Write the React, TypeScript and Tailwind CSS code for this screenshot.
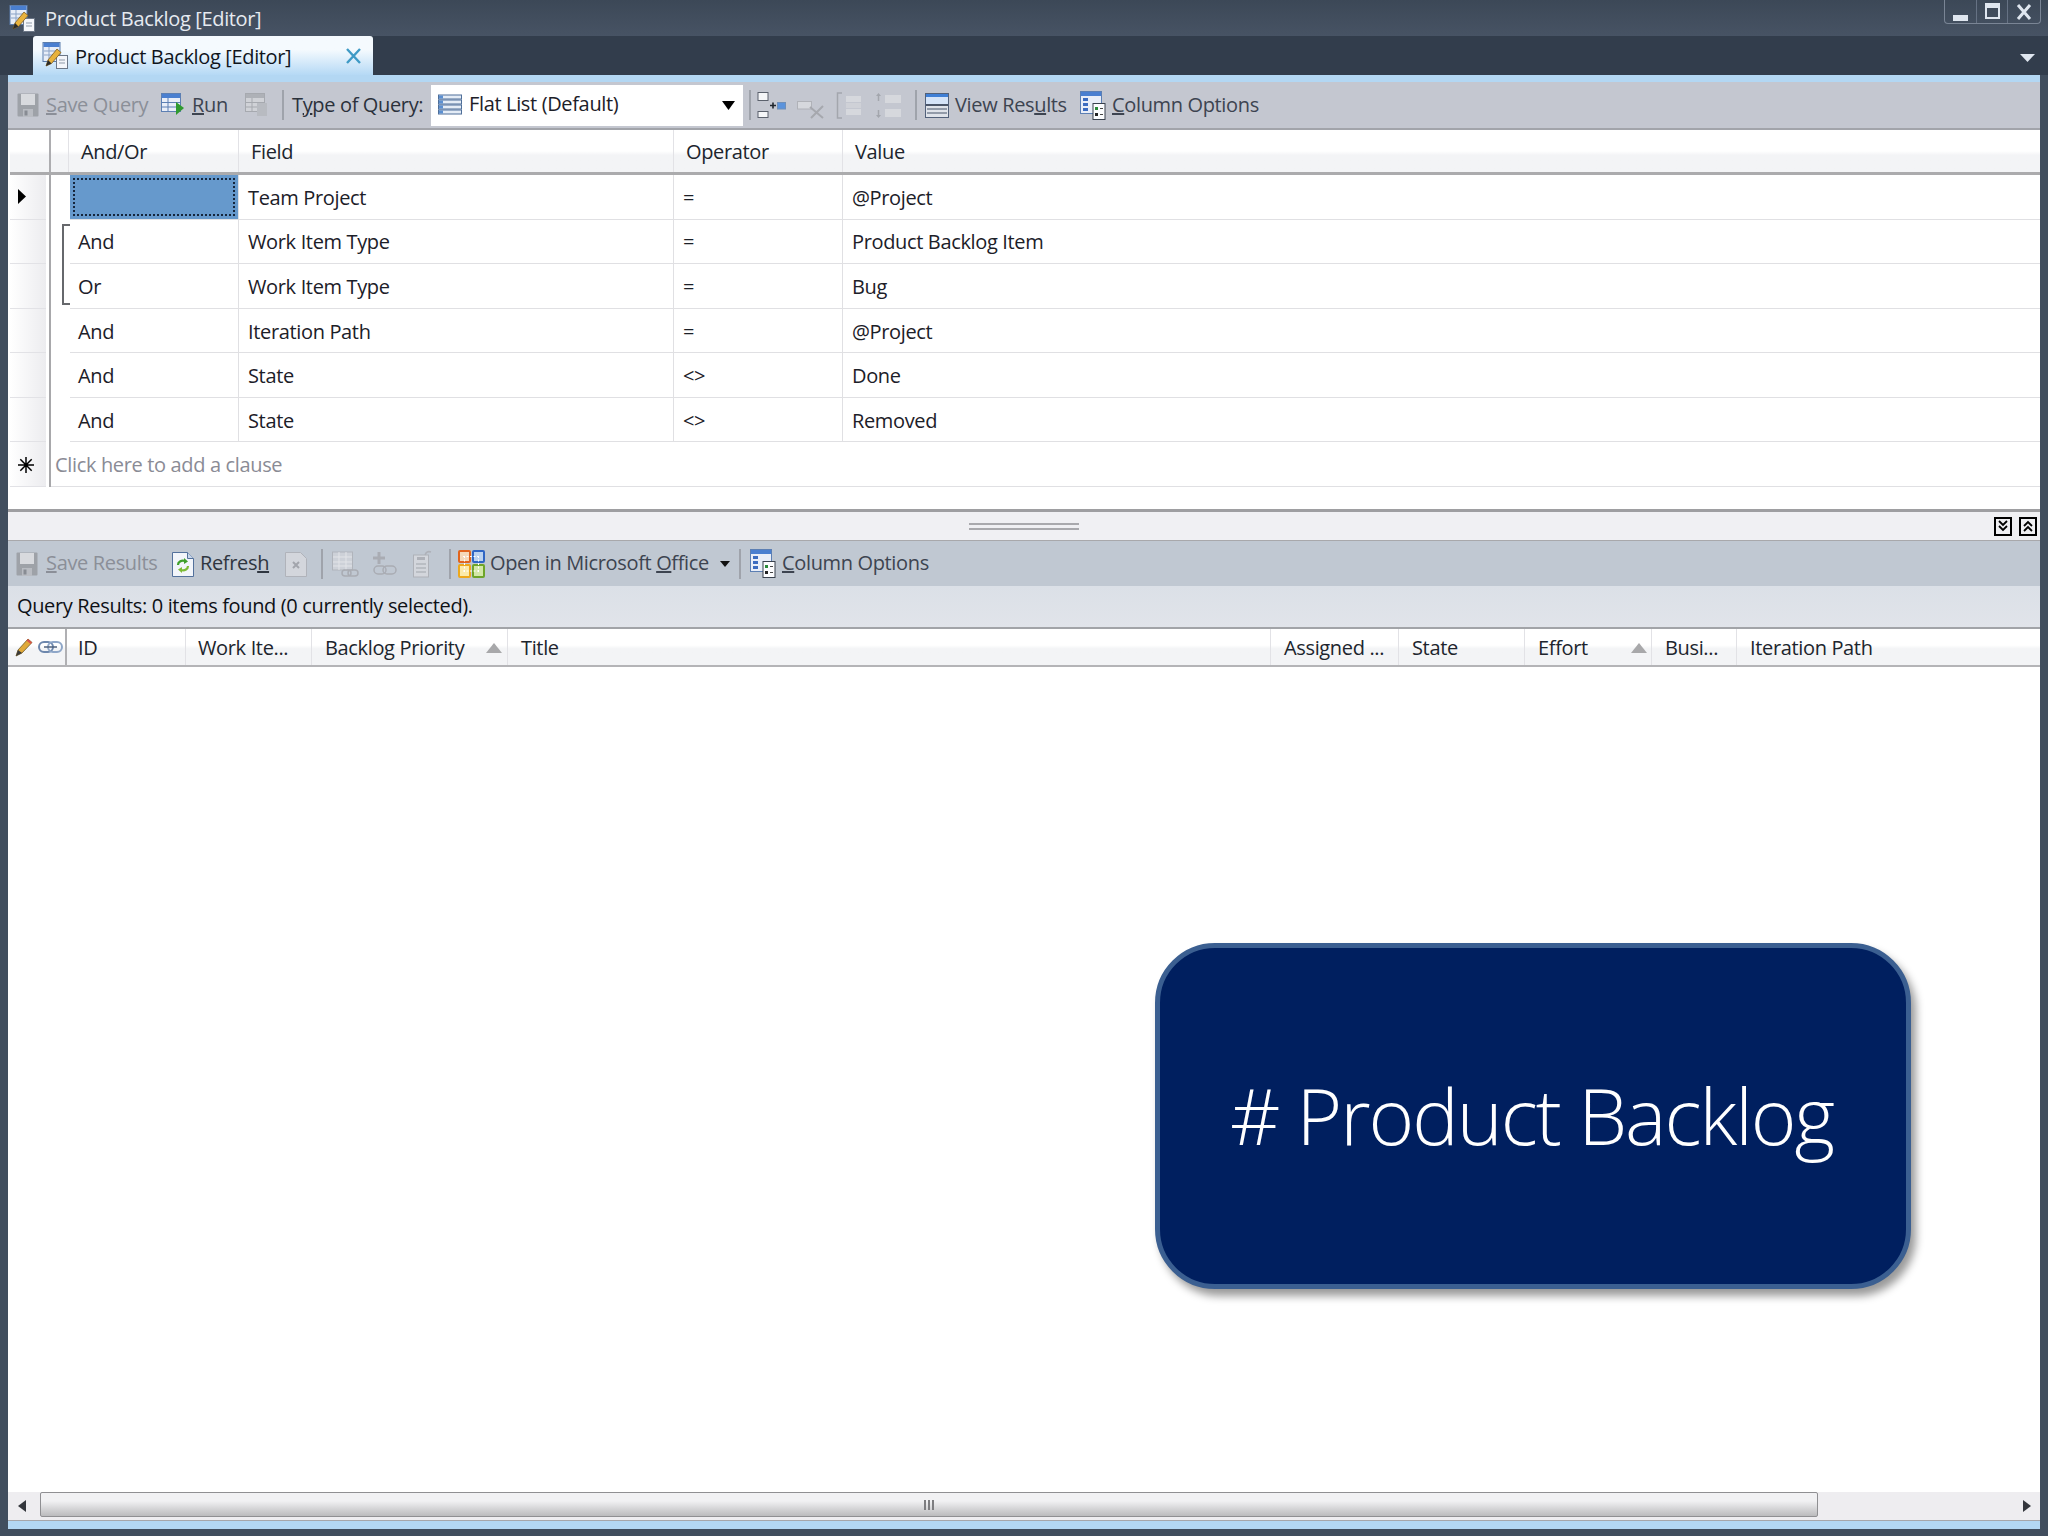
import type { ReactNode } from "react"

function SaveIcon() {
  return (
    <svg width="22" height="24" viewBox="0 0 22 24">
      <rect x="0.5" y="0.5" width="21" height="23" rx="1" fill="#9ea2a8" />
      <rect x="4" y="1" width="14" height="11" fill="#d8dade" />
      <rect x="6" y="16" width="10" height="8" fill="#b9bcc2" />
      <rect x="7.5" y="17.5" width="3" height="5" fill="#888c93" />
    </svg>
  )
}

function TableIcon({ muted }: { muted?: boolean }) {
  const head = muted ? "#aeb1b7" : "#4a7fd0"
  const cell = muted ? "#d0d2d7" : "#e9eef8"
  const line = muted ? "#a6a9af" : "#5c7fb3"
  return (
    <>
      <rect x="0.5" y="0.5" width="19" height="18" fill={cell} stroke={line} />
      <rect x="1" y="1" width="18" height="4" fill={head} />
      <path d="M1 9.5h18M1 14h18M7 5v13" stroke={line} strokeWidth="1" />
    </>
  )
}

function RunIcon() {
  return (
    <svg width="24" height="24" viewBox="0 0 24 24">
      <TableIcon />
      <path d="M15 9l8 6-8 7z" fill="#2f9a2f" />
    </svg>
  )
}

function CopyTableIcon() {
  return (
    <svg width="23" height="24" viewBox="0 0 23 24">
      <TableIcon muted />
      <rect x="12" y="10" width="10" height="13" fill="#b8bbc1" />
    </svg>
  )
}

function EditorIcon() {
  return (
    <svg width="26" height="27" viewBox="0 0 26 27">
      <rect x="1" y="0.5" width="17" height="19" fill="#e8eef8" stroke="#5b7cab" />
      <rect x="1.5" y="1" width="16" height="4" fill="#4a7fd0" />
      <path d="M2 9h15M2 13h15M7 5v14" stroke="#8ba3c6" />
      <rect x="14.5" y="13.5" width="11" height="13" fill="#f4f6fa" stroke="#6c7787" />
      <path d="M17 18h6M17 21h6" stroke="#8f99a8" />
      <path d="M4 24l2-6L15 7l4 3.5L9.5 21.5z" fill="#e8b23c" stroke="#7b5a20" strokeWidth="0.8" />
      <path d="M4 24l2-6 3.5 3.5z" fill="#2a2a2a" />
    </svg>
  )
}

function ListIcon() {
  return (
    <svg width="24" height="22" viewBox="0 0 24 22">
      {[1, 6, 11, 16].map((y) => (
        <g key={y}>
          <rect x="0.5" y={y} width="23" height="4" fill="#e4ecf6" stroke="#4f6f99" />
          <rect x="1" y={y + 0.5} width="4" height="3" fill="#5b8fd1" />
        </g>
      ))}
    </svg>
  )
}

function AddClauseIcon() {
  return (
    <svg width="29" height="26" viewBox="0 0 29 26">
      <rect x="1" y="0.5" width="10" height="8" fill="#f5f6f8" stroke="#5b616c" />
      <rect x="1" y="19.5" width="10" height="6" fill="#f5f6f8" stroke="#5b616c" />
      <path d="M13 13.5h6M16 10.500v6" stroke="#20262e" strokeWidth="1.6" />
      <rect x="20.500" y="10.500" width="8" height="6.500" fill="#5b93dc" stroke="#6f8fb8" />
    </svg>
  )
}

function DeleteClauseIcon() {
  return (
    <svg width="29" height="18" viewBox="0 0 29 18">
      <rect x="0.500" y="0.500" width="14" height="7.500" fill="#d6d8dd" stroke="#b0b2b8" />
      <path d="M13 6l13 11M26 5L14 17" stroke="#a6a8ae" strokeWidth="2" />
    </svg>
  )
}

function GroupIcon() {
  return (
    <svg width="26" height="27" viewBox="0 0 26 27">
      <path d="M6 1H1.500v25H6" fill="none" stroke="#a3a6ad" strokeWidth="1.500" />
      <rect x="10" y="4" width="15" height="6" fill="#d6d8dd" />
      <rect x="10" y="11" width="15" height="5" fill="#cfd1d7" />
      <rect x="10" y="17" width="15" height="6" fill="#d6d8dd" />
    </svg>
  )
}

function UngroupIcon() {
  return (
    <svg width="27" height="27" viewBox="0 0 27 27">
      <path d="M3.500 3v6M3.500 18v6" stroke="#a3a6ad" strokeWidth="1.500" />
      <path d="M1 4l2.500-3L6 4zM1 23l2.500 3L6 23z" fill="#a3a6ad" />
      <rect x="10" y="3" width="16" height="8" fill="#d6d8dd" />
      <rect x="10" y="17" width="16" height="8" fill="#d6d8dd" />
    </svg>
  )
}

function ViewResultsIcon() {
  return (
    <svg width="24" height="25" viewBox="0 0 24 25">
      <rect x="0.500" y="0.500" width="23" height="24" fill="#dfe3ea" stroke="#52617a" />
      <rect x="1" y="1" width="22" height="3" fill="#3f7fd6" />
      <rect x="1" y="4" width="22" height="7" fill="#d5e4f8" />
      <rect x="1" y="11" width="22" height="2" fill="#4b5669" />
      <path d="M2 16h20M2 20h20" stroke="#7a8494" strokeWidth="1.500" />
    </svg>
  )
}

function ColumnOptionsIcon() {
  return (
    <svg width="26" height="29" viewBox="0 0 26 29">
      <rect x="0.5" y="0.5" width="21" height="22" fill="#e9eef8" stroke="#5c7fb3" />
      <rect x="1" y="1" width="20" height="4" fill="#4a7fd0" />
      <rect x="3" y="7" width="5" height="3" fill="#3c6cc0" />
      <rect x="3" y="12" width="5" height="3" fill="#3c6cc0" />
      <rect x="3" y="17" width="5" height="3" fill="#3c6cc0" />
      <rect x="13" y="12.5" width="12" height="16" fill="#fbfcfe" stroke="#39414d" />
      <rect x="15" y="16" width="3" height="3" fill="#2a8a3a" />
      <rect x="15" y="22" width="3" height="3" fill="#222" />
      <path d="M20 17.5h3M20 23.5h3" stroke="#444" />
    </svg>
  )
}

function RefreshIcon() {
  return (
    <svg width="22" height="26" viewBox="0 0 22 26">
      <path d="M0.500 1.500h15l6 6v18H0.500z" fill="#f2f5fa" stroke="#53719c" />
      <path d="M15.500 1.500v6h6" fill="#c8d6ea" stroke="#53719c" />
      <path d="M6 14c0-3 3-5 7-4" fill="none" stroke="#3f9f2b" strokeWidth="2.200" />
      <path d="M12 7l4 3.500-4 2.500z" fill="#3f9f2b" />
      <path d="M16 15c0 3-3 5-7 4" fill="none" stroke="#7cbb35" strokeWidth="2.200" />
      <path d="M10 22l-4-3.500 4-2.500z" fill="#7cbb35" />
    </svg>
  )
}

function DocXIcon() {
  return (
    <svg width="22" height="26" viewBox="0 0 22 26">
      <path d="M0.500 1.500h15l6 6v18H0.500z" fill="#d3d6dc" stroke="#b0b3ba" />
      <path d="M8 11l6 6M14 11l-6 6" stroke="#a2a5ac" strokeWidth="2" />
    </svg>
  )
}

function LinkTableIcon() {
  return (
    <svg width="27" height="28" viewBox="0 0 27 28">
      <rect x="0.500" y="2" width="20" height="18" fill="#cdd1d8" stroke="#b0b4bb" />
      <path d="M1 7h19M1 12h19M1 16h19M7 2v18M14 2v18" stroke="#e2e4e8" />
      <rect x="10" y="20" width="9" height="6" rx="3" fill="none" stroke="#a9acb3" strokeWidth="1.5" />
      <rect x="16" y="20" width="10" height="6" rx="3" fill="none" stroke="#a9acb3" strokeWidth="1.5" />
    </svg>
  )
}

function LinkAddIcon() {
  return (
    <svg width="27" height="26" viewBox="0 0 27 26">
      <path d="M8 1v12M2 7h12" stroke="#a9acb3" strokeWidth="3" />
      <rect x="3" y="15" width="12" height="8" rx="4" fill="none" stroke="#a9acb3" strokeWidth="1.5" />
      <rect x="12" y="15" width="13" height="8" rx="4" fill="none" stroke="#a9acb3" strokeWidth="1.5" />
    </svg>
  )
}

function ClipDocIcon() {
  return (
    <svg width="20" height="28" viewBox="0 0 20 28">
      <rect x="0.500" y="5" width="15" height="22" fill="#d3d6dc" stroke="#aeb1b8" />
      <rect x="4" y="7" width="8" height="3" fill="#aeb1b8" />
      <path d="M3 14h10M3 18h10M3 22h10" stroke="#b3b6bc" strokeWidth="1.500" />
      <path d="M12 5c1-3 3-4 6-3" fill="none" stroke="#aeb1b8" strokeWidth="1.500" />
    </svg>
  )
}

function OfficeIcon() {
  return (
    <svg width="27" height="28" viewBox="0 0 27 28">
      <rect x="1" y="1" width="11" height="11" rx="1" fill="#f5d9b8" stroke="#e2641c" strokeWidth="2" />
      <rect x="15" y="1" width="11" height="11" rx="1" fill="#bcd3f0" stroke="#2f66c4" strokeWidth="2" />
      <rect x="1" y="15" width="11" height="12" rx="1" fill="#fbeaaa" stroke="#eda81c" strokeWidth="2" />
      <rect x="15" y="15" width="11" height="12" rx="1" fill="#d3e8a8" stroke="#6ea52a" strokeWidth="2" />
      <path d="M5 6.500h17M5 21h17M6.500 6v16M20.500 6v16" stroke="#ffffff" strokeWidth="1" strokeDasharray="2 1.500" />
    </svg>
  )
}

function PencilIcon() {
  return (
    <svg width="18" height="20" viewBox="0 0 18 20">
      <path d="M1 19l2-6L13 2l4 3.500L7 16z" fill="#e0a93a" stroke="#6f5a2a" strokeWidth="0.800" />
      <path d="M13 2l4 3.500 -1.500 1.500 -4-3.500z" fill="#d9534a" />
      <path d="M1 19l2-6 4 3z" fill="#3a3a3a" />
    </svg>
  )
}

function LinkIcon() {
  return (
    <svg width="25" height="14" viewBox="0 0 25 14">
      <rect x="1" y="2" width="14" height="10" rx="5" fill="none" stroke="#6d87ad" strokeWidth="2" />
      <rect x="10" y="2" width="14" height="10" rx="5" fill="none" stroke="#8ea6c8" strokeWidth="2" />
      <path d="M6 7h13" stroke="#50627d" strokeWidth="1.500" />
    </svg>
  )
}

function Sep({ className }: { className: string }) {
  return <div className={`w-[2px] h-[30px] bg-[#9fa3ab] ${className}`} />
}

function Triangle() {
  return (
    <svg width="16" height="10" viewBox="0 0 16 10">
      <path d="M8 0l8 10H0z" fill="#a8a8aa" />
    </svg>
  )
}

function Label({ className, children }: { className: string; children: ReactNode }) {
  return <span className={`whitespace-nowrap leading-none ${className}`}>{children}</span>
}

function Slot({ className, children }: { className: string; children: ReactNode }) {
  return <div className={`flex items-center justify-center shrink-0 ${className}`}>{children}</div>
}

const clauses = [
  { group: "", field: "Team Project", op: "=", value: "@Project" },
  { group: "And", field: "Work Item Type", op: "=", value: "Product Backlog Item" },
  { group: "Or", field: "Work Item Type", op: "=", value: "Bug" },
  { group: "And", field: "Iteration Path", op: "=", value: "@Project" },
  { group: "And", field: "State", op: "<>", value: "Done" },
  { group: "And", field: "State", op: "<>", value: "Removed" },
]

const resultColumns = [
  { label: "ID", width: "w-[119px] pl-[11px]" },
  { label: "Work Ite...", width: "w-[126px] pl-[12px]" },
  { label: "Backlog Priority", width: "w-[196px] pl-[13px]", sort: "pr-[5px]" },
  { label: "Title", width: "w-[763px] pl-[13px]" },
  { label: "Assigned ...", width: "w-[128px] pl-[13px]" },
  { label: "State", width: "w-[126px] pl-[13px]" },
  { label: "Effort", width: "w-[127px] pl-[13px]", sort: "pr-[4px]" },
  { label: "Busi...", width: "w-[85px] pl-[13px]" },
  { label: "Iteration Path", width: "flex-1 pl-[13px] border-r-0" },
]

function QueryToolbar() {
  return (
    <div className="flex items-center h-[46px] bg-[#c4c7d0] border-b-2 border-[#a2a4aa] box-content text-[#8b8f98]">
      <Slot className="ml-[9px] w-[22px]"><SaveIcon /></Slot>
      <Label className="ml-[7px] w-[100px]"><u>S</u>ave Query</Label>
      <Slot className="ml-[15px] w-[24px]"><RunIcon /></Slot>
      <Label className="ml-[7px] w-[35px] text-[#3d4450]"><u>R</u>un</Label>
      <Slot className="ml-[18px] w-[23px]"><CopyTableIcon /></Slot>
      <Sep className="ml-[14px]" />
      <Label className="ml-[8px] w-[132px] text-[#2b313b]">T<u>y</u>pe of Query:</Label>
      <div className="ml-[7px] w-[312px] h-[41px] bg-white flex items-center text-[#1c2028]">
        <Slot className="ml-[7px] w-[24px]"><ListIcon /></Slot>
        <Label className="ml-[7px] w-[151px] -mt-[3px]">Flat List (Default)</Label>
        <svg className="ml-[102px]" width="13" height="9" viewBox="0 0 13 9"><path d="M0 0h13L6.500 9z" fill="#000" /></svg>
      </div>
      <Sep className="ml-[6px]" />
      <Slot className="ml-[6px] w-[29px]"><AddClauseIcon /></Slot>
      <Slot className="ml-[11px] w-[29px] mt-[9px]"><DeleteClauseIcon /></Slot>
      <Slot className="ml-[10px] w-[26px]"><GroupIcon /></Slot>
      <Slot className="ml-[13px] w-[27px]"><UngroupIcon /></Slot>
      <Sep className="ml-[13px]" />
      <Slot className="ml-[8px] w-[24px]"><ViewResultsIcon /></Slot>
      <Label className="ml-[6px] w-[110px] text-[#3d4450]">View Res<u>u</u>lts</Label>
      <Slot className="ml-[15px] w-[26px]"><ColumnOptionsIcon /></Slot>
      <Label className="ml-[6px] text-[#3d4450]"><u>C</u>olumn Options</Label>
    </div>
  )
}

function QueryHeader() {
  return (
    <div className="flex h-[42px] box-content border-b-[3px] border-[#ababad] bg-gradient-to-b from-white from-50% to-[#f3f4f6] to-60% text-[#20252d] ml-[2px]">
      <div className="w-[41px] border-r-2 border-[#adadb0]" />
      <div className="w-[18px] border-r border-[#e2e2e6]" />
      <div className="w-[170px] pl-[12px] pt-[2px] flex items-center border-r border-[#e2e2e6]">And/Or</div>
      <div className="w-[435px] pl-[12px] pt-[2px] flex items-center border-r border-[#e2e2e6]">Field</div>
      <div className="w-[169px] pl-[12px] pt-[2px] flex items-center border-r border-[#e2e2e6]">Operator</div>
      <div className="flex-1 pl-[12px] pt-[2px] flex items-center">Value</div>
    </div>
  )
}

function RowHead({ children }: { children?: ReactNode }) {
  return (
    <div className="w-[36px] ml-[2px] shrink-0 flex items-center justify-center border-b border-[#e2e2e6] bg-gradient-to-r from-white to-[#ececef]">
      {children}
    </div>
  )
}

function ClauseRow({ index }: { index: number }) {
  const clause = clauses[index]
  return (
    <div className="flex flex-1 min-h-0 text-[#1c2028]">
      <RowHead>
        {index === 0 && (
          <svg className="ml-[-12px]" width="8" height="15" viewBox="0 0 8 15"><path d="M0 0l8 7.500L0 15z" fill="#000" /></svg>
        )}
      </RowHead>
      <div className="w-[3px] shrink-0" />
      <div className="w-[2px] shrink-0 bg-[#a8a8ab]" />
      <div className="w-[19px] shrink-0 flex flex-col pl-[11px]">
        {index === 1 && <div className="mt-[4px] flex-1 border-l-2 border-t-2 border-[#66686c]" />}
        {index === 2 && <div className="mb-[4px] flex-1 border-l-2 border-b-2 border-[#66686c]" />}
      </div>
      <div className="flex flex-1 border-b border-[#e0e0e3]">
        {index === 0 ? (
          <div className="w-[168px] p-[3px] bg-[#6699cc]">
            <div className="h-full border-2 border-dotted border-[#16263c]" />
          </div>
        ) : (
          <div className="w-[168px] flex items-center pl-[8px] pt-[2px]">{clause.group}</div>
        )}
        <div className="w-[435px] flex items-center pl-[9px] pt-[2px] border-l border-[#e0e0e3]">{clause.field}</div>
        <div className="w-[169px] flex items-center pl-[9px] pt-[2px] border-l border-[#e0e0e3]">{clause.op}</div>
        <div className="flex-1 flex items-center pl-[9px] pt-[2px] border-l border-[#e0e0e3]">{clause.value}</div>
      </div>
    </div>
  )
}

function AddClauseRow() {
  return (
    <div className="flex flex-1 min-h-0">
      <RowHead>
        <svg className="ml-[-4px] mt-[2px]" width="16" height="16" viewBox="0 0 16 16">
          <path d="M8 0v16M0 8h16M2.300 2.300l11.400 11.400M13.700 2.300L2.300 13.700" stroke="#000" strokeWidth="1.500" />
        </svg>
      </RowHead>
      <div className="w-[3px] shrink-0" />
      <div className="w-[2px] shrink-0 bg-[#a8a8ab]" />
      <div className="flex-1 flex items-center pl-[4px] pt-[2px] border-b border-[#e0e0e3] text-[#8a8b95]">Click here to add a clause</div>
    </div>
  )
}

function Splitter() {
  return (
    <div className="flex items-center h-[28px] box-content bg-[#f0f0f3] border-t-[3px] border-b border-t-[#9e9ea1] border-b-[#a8a8ab]">
      <div className="ml-[961px] w-[110px] h-[7px] border-y-2 border-[#a9a9ad]" />
      <div className="ml-auto flex gap-[7px] mr-[3px]">
        <div className="w-[18px] h-[19px] border-2 border-black flex items-center justify-center">
          <svg width="10" height="13" viewBox="0 0 10 13"><path d="M1 1l4 4 4-4M1 6l4 4 4-4" fill="none" stroke="#000" strokeWidth="1.800" /></svg>
        </div>
        <div className="w-[18px] h-[19px] border-2 border-black flex items-center justify-center">
          <svg width="10" height="13" viewBox="0 0 10 13"><path d="M1 6l4-4 4 4M1 11l4-4 4 4" fill="none" stroke="#000" strokeWidth="1.800" /></svg>
        </div>
      </div>
    </div>
  )
}

function ResultsToolbar() {
  return (
    <div className="flex items-center h-[45px] bg-[#c0c8d2] text-[#8b8f98]">
      <Slot className="ml-[8px] w-[22px]"><SaveIcon /></Slot>
      <Label className="ml-[8px] w-[108px] -mt-[2px]"><u>S</u>ave Results</Label>
      <Slot className="ml-[18px] w-[22px]"><RefreshIcon /></Slot>
      <Label className="ml-[6px] w-[66px] -mt-[2px] text-[#2f3640]">Refres<u>h</u></Label>
      <Slot className="ml-[19px] w-[22px]"><DocXIcon /></Slot>
      <Sep className="ml-[14px]" />
      <Slot className="ml-[9px] w-[27px]"><LinkTableIcon /></Slot>
      <Slot className="ml-[12px] w-[27px]"><LinkAddIcon /></Slot>
      <Slot className="ml-[15px] w-[20px]"><ClipDocIcon /></Slot>
      <Sep className="ml-[16px]" />
      <Slot className="ml-[7px] w-[27px]"><OfficeIcon /></Slot>
      <Label className="ml-[5px] w-[222px] -mt-[2px] text-[#3d4450]">Open in Microsoft <u>O</u>ffice</Label>
      <svg className="ml-[8px]" width="10" height="6" viewBox="0 0 10 6"><path d="M0 0h10L5 6z" fill="#111" /></svg>
      <Sep className="ml-[9px]" />
      <Slot className="ml-[9px] w-[26px]"><ColumnOptionsIcon /></Slot>
      <Label className="ml-[6px] -mt-[2px] text-[#3d4450]"><u>C</u>olumn Options</Label>
    </div>
  )
}

function ResultsHeader() {
  return (
    <div className="flex h-[36px] box-content border-t-2 border-b-2 border-t-[#a2a4a8] border-b-[#b4b4b7] bg-gradient-to-b from-white from-45% to-[#f3f4f6] to-55% text-[#20252d]">
      <div className="w-[59px] flex items-center border-r-2 border-[#b0b0b3] pl-[7px] gap-[5px]">
        <PencilIcon />
        <LinkIcon />
      </div>
      {resultColumns.map((col) => (
        <div key={col.label} className={`flex items-center justify-between pt-[2px] border-r border-[#e2e2e6] ${col.width} ${col.sort ?? ""}`}>
          <span className="whitespace-nowrap">{col.label}</span>
          {col.sort && <Triangle />}
        </div>
      ))}
    </div>
  )
}

function ScrollBar() {
  return (
    <div className="flex h-[28px] box-content border-b border-[#a6a6aa] bg-[#eeedf0]">
      <div className="w-[32px] flex items-center pl-[10px]">
        <svg width="8" height="12" viewBox="0 0 8 12"><path d="M8 0v12L0 6z" fill="#33363c" /></svg>
      </div>
      <div className="w-[1778px] h-[25px] rounded-[2px] border border-[#8f8f92] bg-gradient-to-b from-[#f1f1f3] from-35% to-[#bbbbbd] flex items-center justify-center gap-[2px]">
        <div className="w-[2px] h-[10px] bg-[#7d7d80]" />
        <div className="w-[2px] h-[10px] bg-[#7d7d80]" />
        <div className="w-[2px] h-[10px] bg-[#7d7d80]" />
      </div>
      <div className="flex-1 flex items-center justify-end pr-[9px]">
        <svg width="8" height="12" viewBox="0 0 8 12"><path d="M0 0v12l8-6z" fill="#33363c" /></svg>
      </div>
    </div>
  )
}

export default function App() {
  return (
    <div className="relative w-[2048px] h-[1536px] overflow-hidden flex flex-col bg-[#414e5e] font-['Open_Sans',sans-serif] text-[20px] tracking-[-0.35px]">
      <div className="flex items-center h-[36px] shrink-0 bg-gradient-to-b from-[#3c4857] to-[#475364] text-[#e6eaf0]">
        <Slot className="ml-[9px] w-[26px]"><EditorIcon /></Slot>
        <span className="ml-[10px] mt-[2px]">Product Backlog [Editor]</span>
        <div className="ml-auto mr-[7px] -mt-[12px] flex h-[24px] w-[97px] rounded-b-[4px] border border-t-0 border-[#7a8595]">
          <Slot className="w-[32px] border-r border-[#667284]"><div className="w-[15px] h-[6px] mt-[12px] bg-[#dfe6ef]" /></Slot>
          <Slot className="w-[31px] border-r border-[#667284]"><div className="w-[15px] h-[16px] border-2 border-t-[5px] border-[#dfe6ef] -mt-[2px]" /></Slot>
          <Slot className="flex-1">
            <svg width="16" height="16" viewBox="0 0 16 16"><path d="M2 1l12 14M14 1L2 15" stroke="#dfe6ef" strokeWidth="3" /></svg>
          </Slot>
        </div>
      </div>

      <div className="flex items-end h-[39px] shrink-0 px-[8px] bg-[#323d4c]">
        <div className="ml-[25px] w-[340px] h-[39px] rounded-t-[3px] flex items-center bg-gradient-to-b from-[#f5fafe] from-35% to-[#b5d9f5] text-[#10151c]">
          <Slot className="ml-[9px] w-[26px]"><EditorIcon /></Slot>
          <span className="ml-[7px] w-[218px] shrink-0 mt-[2px] whitespace-nowrap">Product Backlog [Editor]</span>
          <svg className="ml-[52px]" width="17" height="16" viewBox="0 0 17 16"><path d="M2 1l13 14M15 1L2 15" stroke="#3f9ac6" strokeWidth="2.400" /></svg>
        </div>
        <svg className="ml-auto mb-[13px] mr-[5px]" width="15" height="8" viewBox="0 0 15 8"><path d="M0 0h15L7.500 8z" fill="#dfe6ef" /></svg>
      </div>

      <div className="flex-1 min-h-0 flex flex-col mx-[8px] mb-[7px] bg-white">
        <div className="h-[7px] shrink-0 bg-[#b3d7f3]" />
        <QueryToolbar />
        <QueryHeader />
        <div className="h-[312px] flex flex-col shrink-0">
          {clauses.map((_, i) => (
            <ClauseRow key={i} index={i} />
          ))}
          <AddClauseRow />
        </div>
        <div className="h-[22px] shrink-0" />
        <Splitter />
        <ResultsToolbar />
        <div className="h-[41px] shrink-0 flex items-center pl-[9px] pb-[2px] bg-gradient-to-b from-[#dbe0e7] to-[#e1e4ea] text-[#0e1116]">
          Query Results: 0 items found (0 currently selected).
        </div>
        <ResultsHeader />
        <div className="flex-1 min-h-0" />
        <ScrollBar />
        <div className="h-[8px] shrink-0 bg-[#b3d7f3]" />
      </div>

      <div className="absolute left-[1155px] top-[943px] w-[756px] h-[346px] rounded-[60px] border-[5px] border-[#3b5f91] bg-[#001f5f] shadow-[5px_7px_8px_rgba(0,0,0,0.4)] flex items-center justify-center text-white text-[78px] font-light tracking-[-2px]">
        <span className="whitespace-nowrap -mt-[2px] -ml-[3px]"># Product Backlog</span>
      </div>
    </div>
  )
}
